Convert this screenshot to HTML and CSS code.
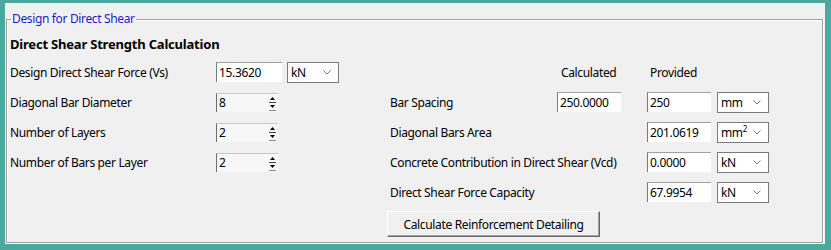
FILE: index.html
```html
<!DOCTYPE html>
<html lang="en">
<head>
    <title>Design for Direct Shear</title>
    <link rel="stylesheet" href="styles.css">
</head>
<body>
    <div class="window">
        <fieldset class="group">
            <legend>Design for Direct Shear</legend>
            <h1>Direct Shear Strength Calculation</h1>

            <div class="calc-grid">
                <!-- row 1 -->
                <label class="lbl">Design Direct Shear Force (Vs)</label>
                <div class="pair">
                    <input class="txt" type="text" value="15.3620" readonly>
                    <div class="combo"><span>kN</span><svg width="8" height="5" viewBox="0 0 8 5"><polyline points="0.5,0.5 4,4 7.5,0.5" fill="none" stroke="#7a7a7a" stroke-width="1"/></svg></div>
                </div>
                <span></span>
                <span class="colhead calc">Calculated</span>
                <span class="colhead prov">Provided</span>
                <span></span>

                <!-- row 2 -->
                <label class="lbl">Diagonal Bar Diameter</label>
                <div class="pair">
                    <div class="spin"><span>8</span><svg width="9" height="17" viewBox="0 0 9 17"><polygon points="2,6 4.5,3 7,6" fill="#000"/><line x1="1" y1="8.5" x2="8" y2="8.5" stroke="#444"/><polygon points="2,11 4.5,14 7,11" fill="#000"/><line x1="1" y1="16.5" x2="8" y2="16.5" stroke="#888"/></svg></div>
                </div>
                <label class="lbl right">Bar Spacing</label>
                <div><input class="txt calc-in" type="text" value="250.0000" readonly></div>
                <div><input class="txt" type="text" value="250" readonly></div>
                <div class="combo"><span>mm</span><svg width="8" height="5" viewBox="0 0 8 5"><polyline points="0.5,0.5 4,4 7.5,0.5" fill="none" stroke="#7a7a7a" stroke-width="1"/></svg></div>

                <!-- row 3 -->
                <label class="lbl">Number of Layers</label>
                <div class="pair">
                    <div class="spin"><span>2</span><svg width="9" height="17" viewBox="0 0 9 17"><polygon points="2,6 4.5,3 7,6" fill="#000"/><line x1="1" y1="8.5" x2="8" y2="8.5" stroke="#444"/><polygon points="2,11 4.5,14 7,11" fill="#000"/><line x1="1" y1="16.5" x2="8" y2="16.5" stroke="#888"/></svg></div>
                </div>
                <label class="lbl right">Diagonal Bars Area</label>
                <span></span>
                <div><input class="txt" type="text" value="201.0619" readonly></div>
                <div class="combo"><span>mm<sup>2</sup></span><svg width="8" height="5" viewBox="0 0 8 5"><polyline points="0.5,0.5 4,4 7.5,0.5" fill="none" stroke="#7a7a7a" stroke-width="1"/></svg></div>

                <!-- row 4 -->
                <label class="lbl">Number of Bars per Layer</label>
                <div class="pair">
                    <div class="spin"><span>2</span><svg width="9" height="17" viewBox="0 0 9 17"><polygon points="2,6 4.5,3 7,6" fill="#000"/><line x1="1" y1="8.5" x2="8" y2="8.5" stroke="#444"/><polygon points="2,11 4.5,14 7,11" fill="#000"/><line x1="1" y1="16.5" x2="8" y2="16.5" stroke="#888"/></svg></div>
                </div>
                <label class="lbl right">Concrete Contribution in Direct Shear (Vcd)</label>
                <span></span>
                <div><input class="txt" type="text" value="0.0000" readonly></div>
                <div class="combo"><span>kN</span><svg width="8" height="5" viewBox="0 0 8 5"><polyline points="0.5,0.5 4,4 7.5,0.5" fill="none" stroke="#7a7a7a" stroke-width="1"/></svg></div>

                <!-- row 5 -->
                <span></span>
                <span></span>
                <label class="lbl right">Direct Shear Force Capacity</label>
                <span></span>
                <div><input class="txt" type="text" value="67.9954" readonly></div>
                <div class="combo"><span>kN</span><svg width="8" height="5" viewBox="0 0 8 5"><polyline points="0.5,0.5 4,4 7.5,0.5" fill="none" stroke="#7a7a7a" stroke-width="1"/></svg></div>

                <!-- row 6 -->
                <span></span>
                <span></span>
                <div class="btn-cell"><button class="calc-btn">Calculate Reinforcement Detailing</button></div>
            </div>
        </fieldset>
    </div>
</body>
</html>
```

FILE: styles.css
```css
body {
    margin: 0;
    background: #4ca89f;
    font-family: 'Noto Sans', 'Open Sans', sans-serif;
    font-size: 12px;
    letter-spacing: -0.35px;
    color: #000;
}
.window {
    margin: 3px 6px 0 5px;
    height: 241px;
    background: #f0f0f0;
    overflow: hidden;
}
.group {
    margin: 9px 2px 0 1px;
    padding: 0 0 0 3px;
    height: 231px;
    box-sizing: border-box;
    border: 1px solid #a0a0a0;
    box-shadow: inset 1px 1px 0 #fff, 1px 1px 0 #fff;
}
.group legend {
    margin-left: 1px;
    padding: 0 1px;
    color: #1a1ac8;
    font-size: 12px;
    line-height: 14px;
}
h1 {
    margin: 10px 0 0 0;
    font-size: 13px;
    line-height: 16px;
    font-weight: bold;
    letter-spacing: -0.2px;
}
.calc-grid {
    display: grid;
    grid-template-columns: 206px 171px 170px 90px 70px 52px;
    grid-template-rows: repeat(5, 30px) 34px;
    align-items: center;
    margin-top: 5px;
}
.lbl {
    white-space: nowrap;
}
.lbl.right {
    padding-left: 3px;
}
.pair {
    display: flex;
    align-items: center;
    gap: 5px;
}
.txt {
    box-sizing: border-box;
    width: 64px;
    height: 20px;
    margin: 0;
    padding: 0 0 0 2px;
    font-family: inherit;
    font-size: 12px;
    letter-spacing: -0.35px;
    color: #000;
    background: #fff;
    border: none;
    border-top: 1px solid #a0a0a0;
    border-left: 1px solid #7a7a7a;
    outline: none;
}
.pair .txt {
    width: 66px;
}
.calc-in {
    width: 64px;
}
.combo {
    box-sizing: border-box;
    width: 52px;
    height: 21px;
    display: flex;
    align-items: center;
    justify-content: space-between;
    padding: 0 7px 0 3px;
    background: #fff;
    border: 1px solid #7a7a7a;
}
.combo sup {
    font-size: 8px;
    line-height: 0;
}
.spin {
    box-sizing: border-box;
    width: 62px;
    height: 19px;
    display: flex;
    align-items: center;
    justify-content: space-between;
    padding: 0 1px 0 2px;
    background: #f7f7f7;
    border-top: 1px solid #c8c8c8;
    border-left: 1px solid #6e6e6e;
}
.colhead {
    white-space: nowrap;
}
.colhead.calc {
    padding-left: 4px;
}
.colhead.prov {
    padding-left: 3px;
}
.btn-cell {
    grid-column: 3 / span 3;
}
.calc-btn {
    box-sizing: border-box;
    width: 213px;
    height: 26px;
    padding: 0;
    font-family: inherit;
    font-size: 12px;
    letter-spacing: -0.35px;
    color: #000;
    background: #f0f0f0;
    border: 1px solid;
    border-color: #fff #696969 #696969 #fff;
    box-shadow: inset -1px -1px 0 #a0a0a0;
}
```
